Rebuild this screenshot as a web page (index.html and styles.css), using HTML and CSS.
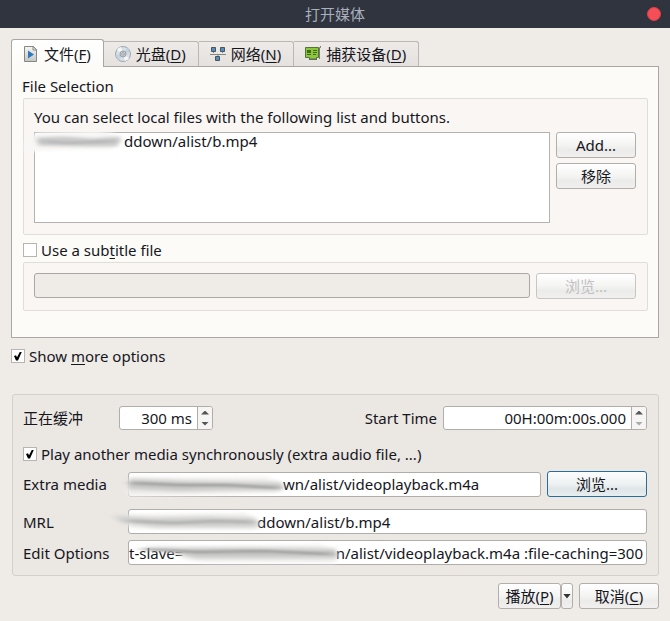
FILE: index.html
```
<!DOCTYPE html>
<html lang="zh-CN">
<head>
<meta charset="utf-8">
<meta name="viewport" content="width=device-width, initial-scale=1">
<title>打开媒体</title>
<link rel="stylesheet" href="styles.css">
</head>
<body>
<header class="titlebar">
  <h1 class="title">打开媒体</h1>
  <button class="close" type="button" aria-label="关闭"></button>
</header>
<form class="dialog">
  <div class="tabs" role="tablist">
    <button class="tab tab-active" type="button" role="tab" aria-selected="true">
      <svg class="icon" width="16" height="16" viewBox="0 0 16 16" aria-hidden="true">
        <defs><linearGradient id="page" x1="0" y1="0" x2="0" y2="1"><stop offset="0" stop-color="#f6f6f4"/><stop offset="1" stop-color="#c4c6c4"/></linearGradient></defs>
        <path d="M1.500 .5h9l3 3v12h-12z" fill="url(#page)" stroke="#858783"/>
        <path d="M10 .5v3.500h3.500z" fill="#fff" stroke="#858783"/>
        <path d="M5 4.500v8l6-4z" fill="#2f78bd"/>
      </svg>
      <span>文件(<u>F</u>)</span>
    </button>
    <button class="tab" type="button" role="tab" aria-selected="false">
      <svg class="icon" width="16" height="16" viewBox="0 0 16 16" aria-hidden="true">
        <circle cx="8" cy="8" r="7.500" fill="#d8dfe5" stroke="#a1a6aa"/>
        <path d="M8 8 2 4a7 7 0 0 1 4-3zM8 8l6 4a7 7 0 0 1-4 3z" fill="#f3f8fb"/>
        <path d="M8 8 1 9a7 7 0 0 0 3 5zM8 8l7-1a7 7 0 0 0-3-5z" fill="#c0d3e1"/>
        <circle cx="8" cy="8" r="3" fill="#c9cdd0" stroke="#9ba0a4"/>
        <circle cx="8" cy="8" r="1.200" fill="#fff" stroke="#858b90" stroke-width=".8"/>
      </svg>
      <span>光盘(<u>D</u>)</span>
    </button>
    <button class="tab" type="button" role="tab" aria-selected="false">
      <svg class="icon" width="16" height="16" viewBox="0 0 16 16" aria-hidden="true">
        <path d="M0 8.500h16M3.500 5v2M12.500 5v2M8 8v3" fill="none" stroke="#858882"/>
        <path d="M1.500 1.500h4v4h-4zM10.500 1.500h4v4h-4zM5.500 10.500h4v4h-4z" fill="#4d8fce" stroke="#50544f"/>
      </svg>
      <span>网络(<u>N</u>)</span>
    </button>
    <button class="tab" type="button" role="tab" aria-selected="false">
      <svg class="icon" width="16" height="16" viewBox="0 0 16 16" aria-hidden="true">
        <path d="M15.500 0v1.500h-1V13" fill="none" stroke="#777b74"/>
        <path d="M.5 1.500h13v10h-2v1.500h-7v-1.500h-4z" fill="#8cc63a" stroke="#55733a"/>
        <path d="M2 4h4v3H2zM2 8h4v1H2zM8 4h4v1H8zM8 6h4v1H8zM8 8h3v1H8z" fill="#41691f"/>
        <path d="M4 13.500h8" stroke="#666"/>
      </svg>
      <span>捕获设备(<u>D</u>)</span>
    </button>
  </div>

  <section class="panel" role="tabpanel">
    <h2 class="caption">File Selection</h2>
    <div class="group">
      <p class="hint">You can select local files with the following list and buttons.</p>
      <div class="file-row">
        <ul class="file-list">
          <li class="file">ddown/alist/b.mp4
            <svg class="smudge smudge-list" viewBox="0 0 104 24" preserveAspectRatio="none" aria-hidden="true">
              <defs>
                <filter id="soft" x="-20%" y="-60%" width="140%" height="220%"><feGaussianBlur stdDeviation="3 2"/></filter>
                <filter id="fine" x="-20%" y="-200%" width="140%" height="500%"><feGaussianBlur stdDeviation="6 1"/></filter>
              </defs>
              <path d="M0 14 12 2 72 0 92 2 98 12 90 20 60 20 0 23z" fill="#f8f7f6" filter="url(#soft)"/>
              <path d="M12 7 40 6 70 8 100 6 96 17 60 17 14 16z" fill="#cacaca" filter="url(#soft)"/>
              <path d="M18 11 45 13 70 12 94 11" fill="none" stroke="#b0b0b0" stroke-width="2" filter="url(#fine)"/>
            </svg>
          </li>
        </ul>
        <div class="file-actions">
          <button class="button" type="button">Add...</button>
          <button class="button" type="button">移除</button>
        </div>
      </div>
    </div>
    <label class="check check-subtitle"><input type="checkbox"><span>Use a sub<u>t</u>itle file</span></label>
    <div class="group browse-row">
      <input class="field" type="text" aria-label="Subtitle file" disabled>
      <button class="button button-wide" type="button" disabled>浏览...</button>
    </div>
  </section>

  <label class="check check-more"><input type="checkbox" checked><span>Show <u>m</u>ore options</span></label>

  <section class="options">
    <div class="timing">
      <label class="name" for="cache">正在缓冲</label>
      <div class="spin spin-cache">
        <input id="cache" type="text" value="300 ms">
        <span class="steps"><button class="step up" type="button" aria-label="增加"></button><button class="step down" type="button" aria-label="减少"></button></span>
      </div>
      <label class="start-name" for="start">Start Time</label>
      <div class="spin spin-start">
        <input id="start" type="text" value="00H:00m:00s.000">
        <span class="steps"><button class="step up" type="button" aria-label="增加"></button><button class="step down" type="button" aria-label="减少" disabled></button></span>
      </div>
    </div>
    <label class="check check-sync"><input type="checkbox" checked><span>Play another media synchronously (extra audio file, ...)</span></label>
    <div class="row row-extra">
      <label class="name" for="extra">Extra media</label>
      <div class="entry">
        <input id="extra" class="field field-extra" type="text" value="wn/alist/videoplayback.m4a">
        <svg class="smudge smudge-extra" viewBox="0 0 176 26" preserveAspectRatio="none" aria-hidden="true">
          <path d="M2 18 8 6 150 5 166 12 162 20 8 25z" fill="#f1f0ee" filter="url(#soft)"/>
          <path d="M8 7 60 9 110 10 168 11 168 18 120 18 60 19 6 17z" fill="#c4c4c3" filter="url(#soft)"/>
          <path d="M10 11 60 13 110 13 164 16" fill="none" stroke="#989897" stroke-width="2" filter="url(#fine)"/>
        </svg>
      </div>
      <button class="button button-wide button-focus" type="button">浏览...</button>
    </div>
    <div class="row row-mrl">
      <label class="name" for="mrl">MRL</label>
      <div class="entry">
        <input id="mrl" class="field field-mrl" type="text" value="ddown/alist/b.mp4">
        <svg class="smudge smudge-mrl" viewBox="0 0 150 26" preserveAspectRatio="none" aria-hidden="true">
          <path d="M2 9 14 6 130 4 143 12 140 20 16 19z" fill="#f1f0ee" filter="url(#soft)"/>
          <path d="M-4 7 40 9 90 8 140 9 146 18 90 18 40 18 8 14z" fill="#cacac9" filter="url(#soft)"/>
          <path d="M14 12 60 14 100 12 138 13" fill="none" stroke="#aaaaa9" stroke-width="2" filter="url(#fine)"/>
        </svg>
      </div>
    </div>
    <div class="row row-edit">
      <label class="name" for="edit">Edit Options</label>
      <div class="entry entry-edit">
        <span class="prefix">t-slave=</span>
        <input id="edit" class="field-edit" type="text" value="n/alist/videoplayback.m4a :file-caching=300">
        <svg class="smudge smudge-edit" viewBox="0 0 220 26" preserveAspectRatio="none" aria-hidden="true">
          <path d="M48 8 190 5 206 12 206 23 70 22 46 18z" fill="#f2f2f1" filter="url(#soft)"/>
          <path d="M4 7 50 8 120 8 206 9 208 18 150 18 60 18 36 12z" fill="#c4c4c3" filter="url(#soft)"/>
          <path d="M6 9 60 12 130 11 200 14" fill="none" stroke="#989897" stroke-width="2" filter="url(#fine)"/>
        </svg>
      </div>
    </div>
  </section>

  <footer class="footer">
    <div class="split">
      <button class="button button-play" type="submit">播放(<u>P</u>)</button>
      <button class="button button-menu" type="button" aria-label="更多播放选项"></button>
    </div>
    <button class="button" type="button">取消(<u>C</u>)</button>
  </footer>
</form>
</body>
</html>
```
FILE: styles.css
```
* { box-sizing: border-box; }

body {
  margin: 0;
  min-height: 100vh;
  background: #efebe7;
  color: #16161d;
  font: 15px/20px "Noto Sans", "Noto Sans CJK SC", sans-serif;
}

button, input { font: inherit; color: inherit; }
button { white-space: nowrap; }
h1, h2, p, ul { margin: 0; padding: 0; font: inherit; }
u { text-underline-offset: 2px; }

.titlebar {
  display: grid;
  grid-template-columns: 1fr auto 1fr;
  align-items: center;
  height: 28px;
  padding: 0 9px;
  background: #2f343f;
  color: #a9afbb;
}
.title { grid-column: 2; }
.close {
  justify-self: end;
  width: 14px;
  height: 14px;
  padding: 0;
  border: 1px solid #d9414b;
  border-radius: 50%;
  background: #f54e57;
}

.dialog { padding: 11px 11px 10px; }

.tabs { display: flex; align-items: flex-end; }
.tab {
  display: flex;
  align-items: center;
  gap: 5px;
  height: 25px;
  padding: 0 12px 0 11px;
  border: 1px solid #bab7b4;
  border-left-width: 0;
  border-bottom: 0;
  border-radius: 0 3px 0 0;
  background: linear-gradient(#edeae7, #e4e1de);
}
.tab-active {
  position: relative;
  height: 28px;
  margin-bottom: -1px;
  border-left-width: 1px;
  border-color: #a9a6a3;
  border-radius: 3px 3px 0 0;
  background: linear-gradient(#fff, #fcfbf8);
}
.icon { flex: none; }

.panel {
  padding: 9px 10px 26px;
  border: 1px solid #a9a6a3;
  background: #fcfbf8;
}
.group {
  margin: 2px 0 0 1px;
  padding: 8px 11px 11px 10px;
  border: 1px solid #e0ddda;
  border-radius: 2px;
  background: #faf6f3;
}
.file-row { display: flex; gap: 6px; margin-top: 5px; }
.file-list {
  flex: 1;
  min-height: 91px;
  border: 1px solid #b4b1ae;
  background: #fff;
  list-style: none;
}
.file { position: relative; padding-left: 89px; line-height: 16px; }
.file-actions { display: flex; flex-direction: column; gap: 5px; width: 80px; }

.button {
  min-width: 80px;
  height: 26px;
  padding: 0 5px;
  border: 1px solid #b1aeab;
  border-radius: 3px;
  background: linear-gradient(#fff, #f4f4f3 50%, #ebebea 70%, #f1f0ef);
}
.button-wide { width: 100px; }
.button:disabled { border-color: #c8c6c4; color: #bfc1c2; }
.button-focus {
  border-color: #2a6c9b;
  background: linear-gradient(#fcfdfd, #edf1f2 50%, #dfe6e8 70%, #e8edee);
}

.field {
  flex: 1;
  width: 100%;
  min-width: 0;
  height: 25px;
  padding: 0 4px;
  border: 1px solid #b0adaa;
  border-radius: 3px;
  background: #fff;
}
.field:disabled { border-color: #aaa7a4; background: #efebe7; }

.check { display: flex; align-items: center; gap: 4px; width: fit-content; }
.check input {
  appearance: none;
  display: grid;
  place-items: center;
  width: 14px;
  height: 14px;
  margin: 0;
  border: 1px solid #b7b4b1;
  background: #fff;
}
.check input:checked::before {
  content: "";
  width: 8px;
  height: 9px;
  background: #000;
  clip-path: polygon(0 50%, 25% 42%, 38% 65%, 75% 0, 100% 0, 50% 100%, 25% 100%);
}
.check-subtitle { margin: 5px 0 0 1px; }
.browse-row { display: flex; gap: 6px; padding: 10px 11px 11px 10px; }
.check-more { margin-top: 8px; }
.check-sync { margin-top: 14px; }

.options {
  margin: 28px 0 0 1px;
  padding: 11px 11px 10px 10px;
  border: 1px solid #d3d0cc;
  border-radius: 3px;
  background: #ebe7e3;
}
.name { flex: none; width: 105px; }
.timing { display: flex; align-items: center; }
.timing .name { width: 96px; }
.start-name { margin-left: auto; }
.spin {
  display: flex;
  height: 24px;
  border: 1px solid #b0adaa;
  border-radius: 3px;
  background: #fff;
}
.spin-cache { width: 94px; }
.spin-start { width: 204px; margin-left: 6px; }
.spin input {
  flex: 1;
  min-width: 0;
  padding: 0 5px;
  border: 0;
  background: none;
  text-align: right;
}
.steps {
  display: flex;
  flex-direction: column;
  width: 15px;
  border-left: 1px solid #b0adaa;
  background: #f6f5f4;
  border-radius: 0 2px 2px 0;
}
.step {
  display: grid;
  flex: 1;
  place-items: center;
  padding: 0;
  border: 0;
  background: none;
}
.step::before, .button-menu::before {
  content: "";
  width: 8px;
  height: 4px;
  background: #555;
  clip-path: polygon(0 0, 100% 0, 50% 100%);
}
.step.up::before { clip-path: polygon(50% 0, 100% 100%, 0 100%); }
.step:disabled::before { background: #aaa; }

.row { display: flex; align-items: center; }
.row-extra { margin-top: 7px; }
.row-mrl { margin-top: 12px; }
.row-edit { margin-top: 6px; }
.row .button { margin-left: 6px; }
.entry { position: relative; display: flex; flex: 1; min-width: 0; }
.field-extra { padding-left: 154px; }
.field-mrl { padding-left: 128px; }
.entry-edit {
  align-items: center;
  height: 25px;
  border: 1px solid #b0adaa;
  border-radius: 3px;
  background: #fff;
}
.field-edit {
  flex: 1;
  min-width: 0;
  padding: 0 3px;
  border: 0;
  background: none;
  text-align: right;
}

/* Brushed-out parts of the paths */
.smudge { position: absolute; pointer-events: none; overflow: visible; }
.smudge-list { left: -10px; top: -2px; width: 100px; height: 22px; }
.smudge-extra { left: -6px; top: 0; width: 168px; height: 26px; }
.smudge-mrl { left: -12px; top: 0; width: 148px; height: 26px; }
.smudge-edit { left: 8px; top: -1px; width: 212px; height: 26px; }

.footer { display: flex; justify-content: flex-end; gap: 6px; margin-top: 7px; }
.split { display: flex; }
.button-play { min-width: 63px; }
.button-menu {
  display: grid;
  place-items: center;
  min-width: 0;
  width: 12px;
  padding: 0;
}
.button-menu::before { height: 5px; background: #333; }
```
